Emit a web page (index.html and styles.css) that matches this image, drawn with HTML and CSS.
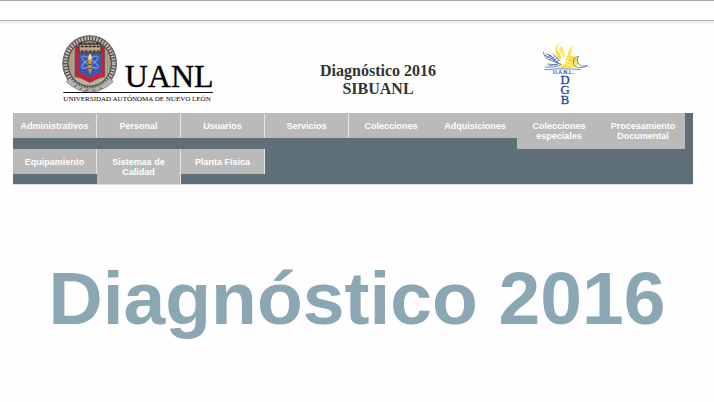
FILE: index.html
```html
<!DOCTYPE html>
<html lang="es">
<head>
<meta charset="utf-8">
<meta name="viewport" content="width=device-width, initial-scale=1">
<title>Diagnóstico 2016 SIBUANL</title>
<link rel="stylesheet" href="styles.css">
</head>
<body>
<div class="topbar"></div>
<div class="page">
  <header class="header">
    <svg class="logo-uanl" viewBox="36 24 456 212" role="img" aria-label="UANL, Universidad Autónoma de Nuevo León">
      <ellipse cx="119" cy="115" rx="82" ry="85" fill="#55534f"/>
      <ellipse cx="119" cy="115" rx="73" ry="76" fill="none" stroke="#c3c0ba" stroke-width="13" stroke-dasharray="5 4"/>
      <ellipse cx="119" cy="115" rx="79" ry="82" fill="none" stroke="#77736c" stroke-width="3"/>
      <ellipse cx="119" cy="115" rx="65" ry="68" fill="#bcb09c" stroke="#4b4741" stroke-width="3"/>
      <path d="M60 95v42M66 80v73M73 70v92M165 70v92M172 80v73M178 95v42" stroke="#807564" stroke-width="2"/>
      <path d="M58 158q60 62 122 0l9 12q-69 63-140 0z" fill="#b5b5b5" stroke="#666" stroke-width="2"/>
      <path d="M72 185l9-5M88 193l8-5M106 196l9-3M127 194l9 1M148 188l8 2" stroke="#555" stroke-width="3"/>
      <path d="M76 63H163V154Q145 157 120 172Q95 157 76 154Z" fill="#cc2237" stroke="#61303b" stroke-width="2"/>
      <path d="M87 57H153V83H87Z" fill="#bba889" stroke="#292622" stroke-width="3"/>
      <path d="M89 54H151M92 64H149M92 78H149" stroke="#24221f" stroke-width="4" stroke-dasharray="9 3"/>
      <path d="M86 84H154V143Q138 146 120 157Q102 146 86 143Z" fill="#3b58b0"/>
      <g fill="none" stroke="#7f9fe0" stroke-width="3">
        <ellipse cx="120" cy="111" rx="29" ry="9" transform="rotate(35 120 111)"/>
        <ellipse cx="120" cy="111" rx="29" ry="9" transform="rotate(-35 120 111)"/>
      </g>
      <path d="M120 85q9 11 4 19h-8q-5-8 4-19z" fill="#ffe05b"/>
      <path d="M113 104h14l-4 14 3 12-6 18-6-18 3-12z" fill="#d99a24"/>
      <path d="M115 118h10M115 130h10" stroke="#6b4927" stroke-width="3"/>
      <text class="logo-name" x="224" y="186">UANL</text>
      <path d="M40 202H489" stroke="#111" stroke-width="3"/>
      <text class="logo-caption" x="40" y="227">UNIVERSIDAD AUTÓNOMA DE NUEVO LEÓN</text>
    </svg>
    <h1 class="title">Diagnóstico 2016<br>SIBUANL</h1>
    <svg class="logo-dgb" viewBox="30 30 150 198" role="img" aria-label="UANL DGB">
      <path d="M96 34Q78 45 82 62Q94 71 93 89Q77 80 77 61Q75 44 96 34Z" fill="#ffdc31"/>
      <path d="M92 47Q108 59 103 86Q96 75 88 61Z" fill="#ffe678"/>
      <path d="M127 46Q117 58 113 75L104 92L118 89Q126 67 127 46Z" fill="#ffe053"/>
      <path d="M120 78Q145 75 144 101Q132 117 104 114L80 115Q95 109 104 97Z" fill="#ffdc31"/>
      <path d="M93 97L123 106M100 89L136 104M94 110L119 82M108 114L135 85M119 114L143 93" stroke="#fff" stroke-width="2"/>
      <g fill="none" stroke="#3152a3" stroke-width="2">
        <path d="M40 65Q43 86 61 91L94 103Q74 114 44 111M44 75L87 99M47 71Q67 76 82 96M57 73L74 91M69 71L91 94M49 84L64 76M57 90L75 79M68 94L82 83M76 99L88 88M51 102L83 105M56 108L87 101"/>
        <path d="M146 79Q127 82 131 103Q140 121 173 107Q151 113 143 97Q139 86 146 79Z"/>
      </g>
      <path d="M43 119Q104 114 152 119" fill="none" stroke="#3152a3" stroke-width="2"/>
      <text class="dgb-name" x="100" y="132">U.A.N.L.</text>
      <g class="dgb-letter">
        <text x="105" y="163">D</text>
        <text x="105" y="192">G</text>
        <text x="105" y="222">B</text>
      </g>
    </svg>
  </header>
  <nav class="menu" aria-label="Secciones">
    <a class="item divided" href="#">Administrativos</a>
    <a class="item divided" href="#">Personal</a>
    <a class="item divided" href="#">Usuarios</a>
    <a class="item divided" href="#">Servicios</a>
    <a class="item" href="#">Colecciones</a>
    <a class="item" href="#">Adquisiciones</a>
    <a class="item tall" href="#">Colecciones especiales</a>
    <a class="item tall" href="#">Procesamiento Documental</a>
    <a class="item divided" href="#">Equipamiento</a>
    <a class="item divided tall" href="#">Sistemas de Calidad</a>
    <a class="item divided" href="#">Planta Física</a>
  </nav>
</div>
<main class="hero">Diagnóstico 2016</main>
</body>
</html>
```
FILE: styles.css
```css
* {
  box-sizing: border-box;
}

body {
  margin: 0;
  background: #fefefe;
  font-family: "Liberation Sans", Arial, sans-serif;
}

.topbar {
  height: 24px;
  border-top: 1px solid #a9a9a9;
  border-bottom: 3px solid #f0f0f0;
  background: #fff;
  box-shadow: inset 0 -1px #a9a9a9;
}

.page {
  margin: 0 21px 0 13px;
}

.header {
  display: grid;
  grid-template-columns: 250fr 230fr 144fr 56fr;
  justify-items: center;
  align-items: start;
  padding: 9px 0 7px;
}

.logo-uanl {
  display: block;
  width: 152px;
  height: 71px;
}

.logo-name {
  font: 96px "Liberation Serif", serif;
  fill: #000;
  stroke: #000;
  stroke-width: 1;
}

.logo-caption {
  font: 21px "Liberation Serif", serif;
  fill: #000;
}

.title {
  margin: 29px 0 0;
  color: #333;
  font: bold 16px/18px "Liberation Serif", serif;
  text-align: center;
}

.logo-dgb {
  display: block;
  width: 50px;
  height: 66px;
  margin-top: 7px;
}

.dgb-name {
  font: bold 16px "Liberation Sans", sans-serif;
  fill: #3152a3;
  text-anchor: middle;
}

.dgb-letter {
  font: 38px "Liberation Serif", serif;
  fill: #24479c;
  stroke: #24479c;
  stroke-width: 1;
  text-anchor: middle;
}

.menu {
  display: grid;
  grid-template-columns: repeat(auto-fill, 84px);
  grid-template-rows: 36px 35px;
  grid-auto-rows: 36px;
  align-items: start;
  border-bottom: 1px solid #dcdfe1;
  background: #5f6f79;
}

.item {
  padding: 8px 6px 7px;
  background: #bababa;
  color: #fff;
  font-size: 9px;
  font-weight: bold;
  line-height: 10px;
  text-align: center;
  text-decoration: none;
}

.divided {
  border-right: 1px solid #e4e4e4;
}

.tall {
  align-self: stretch;
}

.hero {
  margin-top: 70px;
  color: #8aa7b3;
  font-size: 75px;
  font-weight: bold;
  line-height: 86px;
  text-align: center;
}
```
